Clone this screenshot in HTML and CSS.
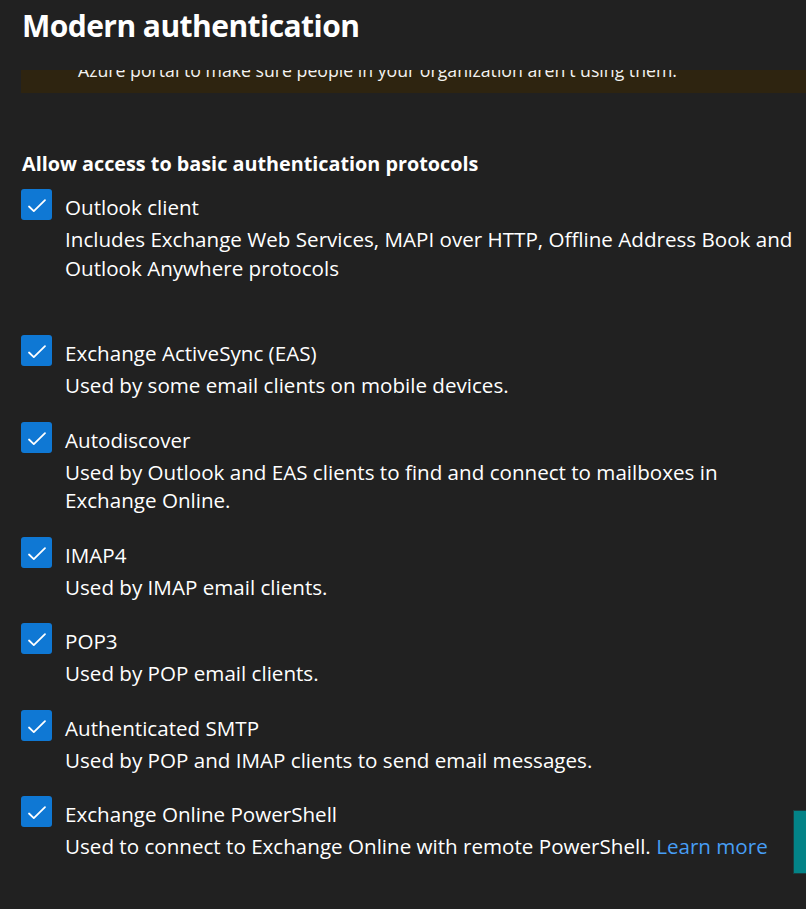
FILE: index.html
```html
<!DOCTYPE html>
<html lang="en">
<head>
  <meta charset="UTF-8">
  <title>Modern authentication</title>
  <meta name="viewport" content="width=device-width, initial-scale=1.0">
  <link rel="stylesheet" href="styles.css">
</head>
<body>

  <!-- panel header -->
  <div class="panel-head">
    <h1>Modern authentication</h1>
  </div>

  <div class="panel-body">
    <!-- warning banner, scrolled under the header -->
    <div class="banner">
      <p>Azure portal to make sure people in your organization aren't using them.</p>
    </div>

    <h2>Allow access to basic authentication protocols</h2>

    <ul class="protocols">
      <li class="item item-spaced">
        <span class="check"><svg viewBox="0 0 31 31"><path d="M8 17.5l4.8 4.6 11.2-11"/></svg></span>
        <div class="text">
          <div class="label">Outlook client</div>
          <div class="desc">Includes Exchange Web Services, MAPI over HTTP, Offline Address Book and Outlook Anywhere protocols</div>
        </div>
      </li>
      <li class="item">
        <span class="check"><svg viewBox="0 0 31 31"><path d="M8 17.5l4.8 4.6 11.2-11"/></svg></span>
        <div class="text">
          <div class="label">Exchange ActiveSync (EAS)</div>
          <div class="desc">Used by some email clients on mobile devices.</div>
        </div>
      </li>
      <li class="item">
        <span class="check"><svg viewBox="0 0 31 31"><path d="M8 17.5l4.8 4.6 11.2-11"/></svg></span>
        <div class="text">
          <div class="label">Autodiscover</div>
          <div class="desc">Used by Outlook and EAS clients to find and connect to mailboxes in Exchange Online.</div>
        </div>
      </li>
      <li class="item">
        <span class="check"><svg viewBox="0 0 31 31"><path d="M8 17.5l4.8 4.6 11.2-11"/></svg></span>
        <div class="text">
          <div class="label">IMAP4</div>
          <div class="desc">Used by IMAP email clients.</div>
        </div>
      </li>
      <li class="item">
        <span class="check"><svg viewBox="0 0 31 31"><path d="M8 17.5l4.8 4.6 11.2-11"/></svg></span>
        <div class="text">
          <div class="label">POP3</div>
          <div class="desc">Used by POP email clients.</div>
        </div>
      </li>
      <li class="item">
        <span class="check"><svg viewBox="0 0 31 31"><path d="M8 17.5l4.8 4.6 11.2-11"/></svg></span>
        <div class="text">
          <div class="label">Authenticated SMTP</div>
          <div class="desc">Used by POP and IMAP clients to send email messages.</div>
        </div>
      </li>
      <li class="item">
        <span class="check"><svg viewBox="0 0 31 31"><path d="M8 17.5l4.8 4.6 11.2-11"/></svg></span>
        <div class="text">
          <div class="label">Exchange Online PowerShell</div>
          <div class="desc">Used to connect to Exchange Online with remote PowerShell. <a href="#">Learn more</a></div>
        </div>
      </li>
    </ul>
  </div>

  <!-- floating side tab -->
  <div class="side-tab"></div>

</body>
</html>
```

FILE: styles.css
```css
* { margin: 0; padding: 0; box-sizing: border-box; }
body {
  font-family: "Open Sans", "Noto Sans", sans-serif;
  background: #212121;
  color: #ffffff;
  width: 806px;
  height: 909px;
  overflow: hidden;
  position: relative;
}

.panel-head {
  height: 70px;
  padding: 6px 0 0 22px;
}
.panel-head h1 {
  font-size: 30px;
  font-weight: 700;
  line-height: 40px;
  letter-spacing: -0.55px;
}

.panel-body {
  padding-left: 21px;
  width: 812px;
}

.banner {
  height: 23px;
  background: #2e2410;
  overflow: hidden;
  padding-left: 57px;
}
.banner p {
  font-size: 17.7px;
  line-height: 22px;
  margin-top: -11px;
  color: #f2f2f2;
  white-space: nowrap;
}

h2 {
  font-size: 19.8px;
  font-weight: 700;
  line-height: 28px;
  margin: 57px 0 15px 1px;
}

.protocols { list-style: none; }
.item {
  display: flex;
  gap: 13px;
  margin-bottom: 26px;
}
.item-spaced { margin-bottom: 57px; }

.check {
  flex: none;
  width: 31px;
  height: 31px;
  margin-top: -4px;
  border-radius: 3px;
  background: #0f78d4;
}
.check svg {
  display: block;
  width: 31px;
  height: 31px;
  fill: none;
  stroke: #ffffff;
  stroke-width: 1.8;
  stroke-linecap: round;
  stroke-linejoin: round;
}

.text { flex: 1; }
.label {
  font-size: 20.6px;
  line-height: 28px;
  margin-bottom: 4px;
}
.desc {
  font-size: 20.6px;
  line-height: 28.5px;
}
.desc a {
  color: #479ef5;
  text-decoration: none;
}

.side-tab {
  position: absolute;
  left: 793px;
  top: 810px;
  width: 20px;
  height: 64px;
  background: #038387;
  border: 1px solid #1a3f40;
}
```
